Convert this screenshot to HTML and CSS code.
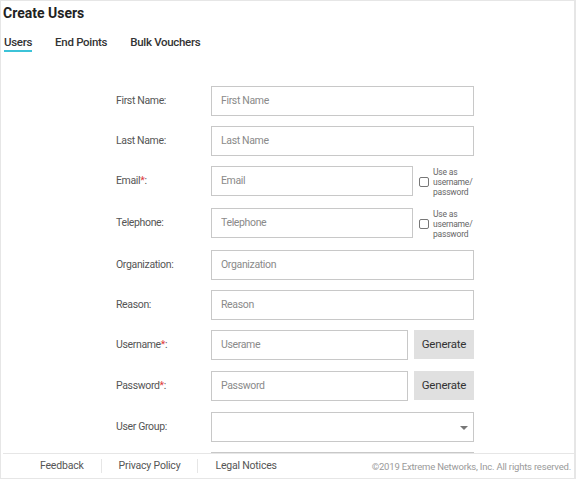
FILE: index.html
```html
<!DOCTYPE html>
<html>
<head>
	<title>Create Users</title>
	<link rel="stylesheet" href="styles.css">
</head>
<body>
<div class="page">
	<h1 class="head">Create Users</h1>
	<div class="tabs">
		<span class="tab active">Users</span>
		<span class="tab">End Points</span>
		<span class="tab">Bulk Vouchers</span>
	</div>
	<form class="userForm">
		<div class="row">
			<label class="rowLabel">First Name:</label>
			<input type="text" class="field" placeholder="First Name">
		</div>
		<div class="row">
			<label class="rowLabel">Last Name:</label>
			<input type="text" class="field" placeholder="Last Name">
		</div>
		<div class="row checkRow">
			<label class="rowLabel">Email<span class="req">*</span>:</label>
			<input type="text" class="field short" placeholder="Email">
			<label class="useAs"><span class="box"></span><span class="useText">Use as<br>username/<br>password</span></label>
		</div>
		<div class="row checkRow">
			<label class="rowLabel">Telephone:</label>
			<input type="text" class="field short" placeholder="Telephone">
			<label class="useAs"><span class="box"></span><span class="useText">Use as<br>username/<br>password</span></label>
		</div>
		<div class="row">
			<label class="rowLabel">Organization:</label>
			<input type="text" class="field" placeholder="Organization">
		</div>
		<div class="row">
			<label class="rowLabel">Reason:</label>
			<input type="text" class="field" placeholder="Reason">
		</div>
		<div class="row genRow">
			<label class="rowLabel">Username<span class="req">*</span>:</label>
			<input type="text" class="field gen" placeholder="Userame">
			<button type="button" class="genButton">Generate</button>
		</div>
		<div class="row genRow">
			<label class="rowLabel">Password<span class="req">*</span>:</label>
			<input type="text" class="field gen" placeholder="Password">
			<button type="button" class="genButton">Generate</button>
		</div>
		<div class="row">
			<label class="rowLabel">User Group:</label>
			<div class="field select"><span class="caret"></span></div>
		</div>
		<!-- next row sits under the footer -->
		<div class="row">
			<span class="rowLabel"></span>
			<input type="text" class="field">
		</div>
	</form>
	<div class="footer">
		<span class="footLink">Feedback</span>
		<span class="footLink">Privacy Policy</span>
		<span class="footLink">Legal Notices</span>
		<span class="copy">&copy;2019 Extreme Networks, Inc. All rights reserved.</span>
	</div>
</div>
</body>
</html>
```

FILE: styles.css
```css
body{
	margin:0;
	font-family:Roboto, "Liberation Sans", sans-serif;
	color:#333;
}
.page{
	position:relative;
	height:479px;
	box-sizing:border-box;
	border:1px solid #e6e6e6;
	border-right:2px solid #e6e6e6;
	overflow:hidden;
}
.head{
	margin:4px 0 0 2px;
	font-size:14px;
	line-height:17px;
	font-weight:bold;
	color:#222;
}
.tabs{
	display:flex;
	gap:23px;
	margin:14px 0 0 3px;
}
.tab{
	font-size:11.5px;
	font-weight:500;
	letter-spacing:-0.3px;
	line-height:13.5px;
	border-bottom:2px solid transparent;
	color:#333;
}
.tab.active{
	border-bottom-color:#3cc3d8;
}
.userForm{
	margin:34px 0 0 115px;
	display:flex;
	flex-direction:column;
	gap:10px;
}
.row{
	display:flex;
	align-items:flex-start;
	height:30px;
}
.checkRow{
	height:32px;
}
.genRow{
	height:31px;
}
.rowLabel{
	width:95px;
	font-size:10.5px;
	letter-spacing:-0.35px;
	line-height:30px;
	color:#555;
}
.req{
	color:#e03a3a;
}
.field{
	box-sizing:border-box;
	width:263px;
	height:30px;
	margin:0;
	padding:0 9px;
	border:1px solid #c8c8c8;
	font-family:Roboto, "Liberation Sans", sans-serif;
	font-size:10.5px;
	letter-spacing:-0.35px;
	color:#333;
	background:white;
}
.field::placeholder{
	color:#8a8a8a;
}
.field.short{
	width:202px;
}
.field.gen{
	width:197px;
}
.useAs{
	display:flex;
	align-items:center;
	margin:1px 0 0 6px;
}
.box{
	width:8px;
	height:8px;
	border:1px solid #777;
	border-radius:2px;
	margin-right:4px;
}
.useText{
	font-size:8.5px;
	letter-spacing:-0.2px;
	line-height:10.2px;
	color:#666;
}
.genButton{
	margin-left:6px;
	width:60px;
	height:29px;
	border:none;
	background:#e0e0e0;
	font-family:Roboto, "Liberation Sans", sans-serif;
	font-size:11.5px;
	letter-spacing:-0.2px;
	color:#333;
	padding:0;
}
.select{
	position:relative;
}
.caret{
	position:absolute;
	right:5px;
	top:13px;
	border-left:4px solid transparent;
	border-right:4px solid transparent;
	border-top:4px solid #777;
}
.footer{
	position:absolute;
	left:2px;
	right:0;
	bottom:0;
	height:24px;
	border-top:1px solid #e6e6e6;
	background:white;
	display:flex;
	align-items:center;
	padding-left:20px;
	font-size:10.5px;
	letter-spacing:-0.2px;
	color:#555;
}
.footLink{
	padding:0 17px;
	line-height:14px;
	border-left:1px solid #e6e6e6;
}
.footLink:first-child{
	border-left:none;
}
.copy{
	margin-left:auto;
	padding-right:3px;
	font-size:9.5px;
	color:#9a9a9a;
}
```
